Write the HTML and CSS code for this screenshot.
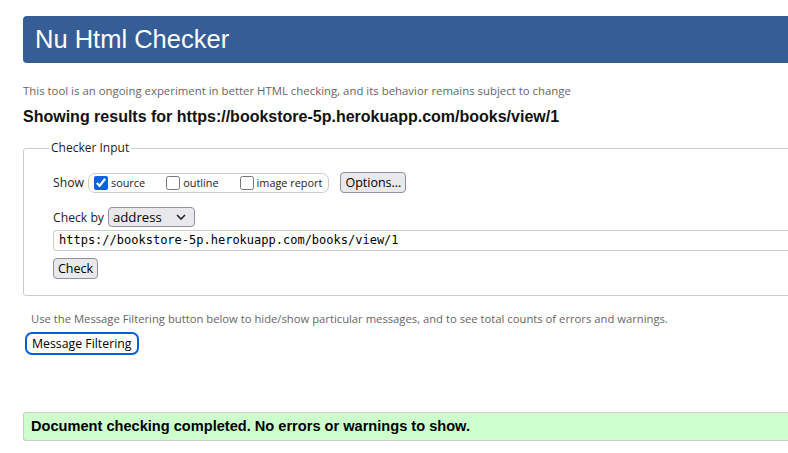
FILE: index.html
```html
<!DOCTYPE html>
<html>
<head>
<meta charset="utf-8">
<title>Nu Html Checker</title>
<link rel="stylesheet" href="styles.css">
</head>
<body>
<div class="page">
  <h1 class="header">Nu Html Checker</h1>
  <p class="intro">This tool is an ongoing experiment in better HTML checking, and its behavior remains subject to change</p>
  <h2 class="results">Showing results for https://bookstore-5p.herokuapp.com/books/view/1</h2>
  <fieldset class="checker">
    <legend class="legend">Checker Input</legend>
    <div class="row show-row">
      <span class="label">Show</span>
      <span class="group">
        <label class="opt"><input type="checkbox" class="cb" checked>source</label>
        <label class="opt"><input type="checkbox" class="cb">outline</label>
        <label class="opt"><input type="checkbox" class="cb">image report</label>
      </span>
      <button class="btn options">Options...</button>
    </div>
    <div class="row by-row">
      <span class="label">Check by</span>
      <span class="select">
        <select class="select-native"><option>address</option></select>
        <svg class="chev" width="10" height="6" viewBox="0 0 10 6"><path d="M1 1 L5 5 L9 1" fill="none" stroke="#222" stroke-width="1.6"/></svg>
      </span>
    </div>
    <div class="url">https://bookstore-5p.herokuapp.com/books/view/1</div>
    <button class="btn check">Check</button>
  </fieldset>
  <p class="filter-note">Use the Message Filtering button below to hide/show particular messages, and to see total counts of errors and warnings.</p>
  <button class="btn filter">Message Filtering</button>
  <div class="success">Document checking completed. No errors or warnings to show.</div>
</div>
</body>
</html>
```
FILE: styles.css
```css
html, body {
  margin: 0;
  padding: 0;
  overflow: hidden;
  background: #fff;
}
body {
  font-family: "Open Sans", "Noto Sans", sans-serif;
  color: #000;
}
.page {
  width: 800px;
  padding: 16px 0 0 23px;
}
.header {
  margin: 0;
  height: 47px;
  padding-left: 12px;
  background: #365d95;
  border-radius: 4px 0 0 4px;
  color: #fff;
  font: normal 25.5px "Liberation Sans", Arial, sans-serif;
  line-height: 47px;
}
.intro {
  margin: 20px 0 0 0;
  font-size: 11.4px;
  line-height: 16px;
  color: #666;
}
.results {
  margin: 8px 0 0 0;
  font: bold 16px/20px "Liberation Sans", Arial, sans-serif;
  color: #111;
}
.checker {
  margin: 13px 0 0 0;
  padding: 16px 0 16px 29px;
  border: 1px solid #ccc;
  border-radius: 3px;
}
.legend {
  margin-left: -4px;
  padding: 0 2px;
  font-size: 12px;
  line-height: 16px;
  color: #222;
}
.row {
  display: flex;
  align-items: center;
}
.show-row {
  height: 21px;
}
.label {
  font-size: 12.2px;
  color: #222;
  margin-right: 4px;
}
.group {
  display: flex;
  align-items: center;
  height: 18px;
  border: 1px solid #ccc;
  border-radius: 7px;
  padding: 0 6px 0 5px;
}
.opt {
  display: flex;
  align-items: center;
  font-size: 10.9px;
  color: #222;
}
.opt + .opt {
  margin-left: 21px;
}
.cb {
  margin: 0 3px 0 0;
  width: 14px;
  height: 14px;
  accent-color: #0a62e0;
}
.btn {
  font-family: "Open Sans", "Noto Sans", sans-serif;
  font-size: 12.5px;
  color: #000;
  background: #e9e9ed;
  border: 1px solid #8f8f9d;
  border-radius: 4px;
  padding: 0 4px;
  height: 21px;
  line-height: 19px;
}
.options {
  margin-left: 11px;
}
.by-row {
  margin-top: 14px;
  height: 20px;
}
.select {
  display: flex;
  align-items: center;
  height: 20px;
  box-sizing: border-box;
  width: 87px;
  background: #e9e9ed;
  border: 1px solid #8f8f9d;
  border-radius: 4px;
  padding: 0 8px 0 4px;
}
.select-native {
  appearance: none;
  -webkit-appearance: none;
  border: 0;
  background: transparent;
  font-family: "Open Sans", "Noto Sans", sans-serif;
  font-size: 13.2px;
  color: #000;
  padding: 0;
  flex: 1;
  min-width: 0;
  outline: none;
}
.url {
  margin-top: 3px;
  height: 21px;
  box-sizing: border-box;
  border: 1px solid #ccc;
  border-right: 0;
  border-radius: 4px 0 0 4px;
  padding-left: 5px;
  font: 12px/19px "DejaVu Sans Mono", "Liberation Mono", monospace;
  color: #000;
}
.check {
  margin-top: 7px;
  display: block;
}
.filter-note {
  margin: 15px 0 0 8px;
  font-size: 11.25px;
  line-height: 16px;
  color: #666;
}
.filter {
  display: block;
  margin: 5px 0 0 2px;
  height: 23px;
  border: 2px solid #0060df;
  border-radius: 7px;
  background: #fff;
  padding: 0 5px;
  font-size: 12.3px;
}
.success {
  margin-top: 57px;
  height: 29px;
  box-sizing: border-box;
  background: #ccffcc;
  border: 1px solid #ccc;
  border-right: 0;
  border-radius: 3px 0 0 3px;
  padding-left: 7px;
  font: bold 14.6px/27px "Liberation Sans", Arial, sans-serif;
  color: #000;
}
```
